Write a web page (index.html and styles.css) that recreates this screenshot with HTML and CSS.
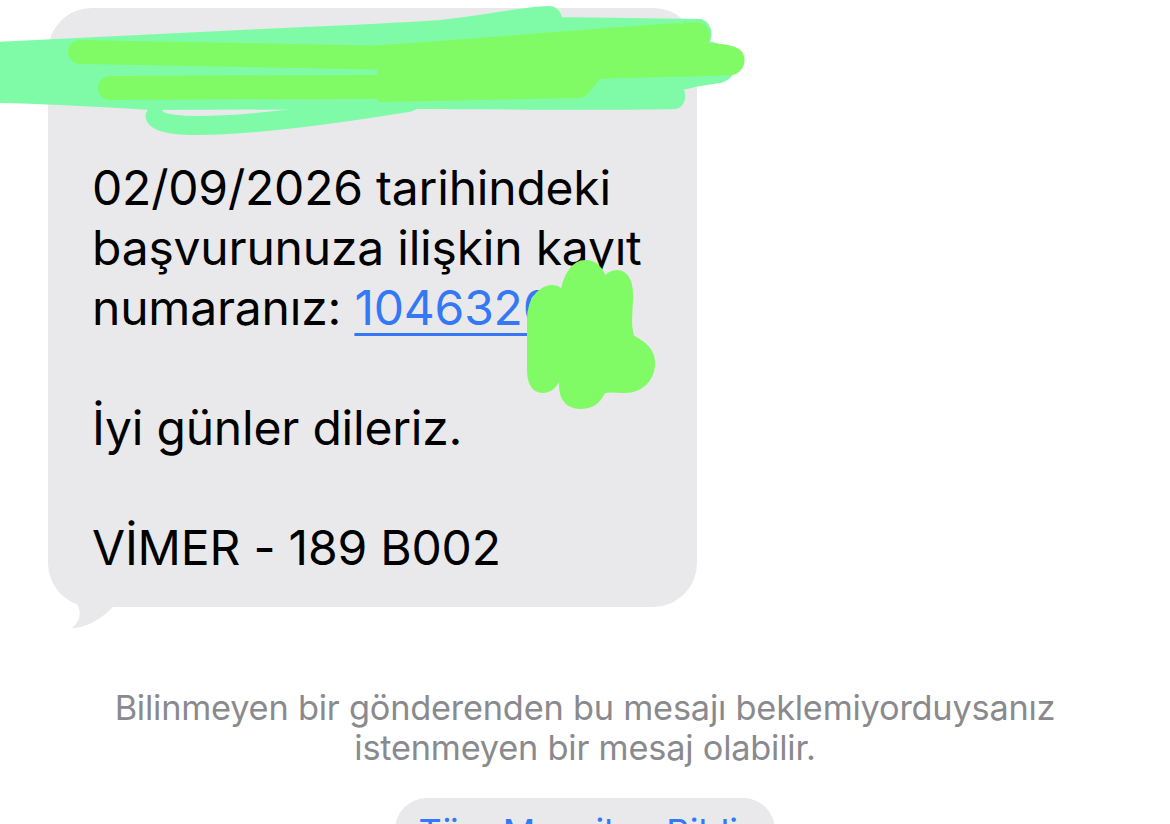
FILE: index.html
```html
<!DOCTYPE html>
<html lang="tr">
<head>
<meta charset="utf-8">
<title>Mesaj</title>
<link rel="stylesheet" href="styles.css">
</head>
<body>
<main class="thread">
  <div class="bubble-row">
    <div class="bubble">
      <svg class="tail" width="90" height="100" viewBox="0 0 90 100">
        <path d="M0 0 L0 23 C2 48 14 61 29 67 C34 75 32 85 24 91 C38 91 52 83 65 70 L90 70 L90 0 Z" fill="#e9e9eb"/>
      </svg>
      <p class="msg">02/09/2026 tarihindeki başvurunuza ilişkin kayıt numaranız: <span class="link">1046320</span></p>
      <p class="msg">İyi günler dileriz.</p>
      <p class="msg">VİMER - 189 B002</p>
    </div>
  </div>
  <p class="notice">Bilinmeyen bir gönderenden bu mesajı beklemiyorduysanız<br>istenmeyen bir mesaj olabilir.</p>
  <div class="actions">
    <button class="report">Tüm Mesajları Bildir</button>
  </div>
</main>
<svg class="scribble" width="1170" height="420" viewBox="0 0 1170 420">
  <g fill="#7ffba8" stroke="#7ffba8" stroke-width="6" stroke-linejoin="round">
    <path d="M-5 45 C60 42 150 37 260 32 C330 29 380 27 440 23 C490 18 520 10 548 9 C556 9 558 14 560 20 C620 21 670 21 700 22 C710 24 711 40 704 43 C718 46 730 50 732 60 C734 72 728 78 720 80 C705 82 690 84 680 88 C684 96 682 104 676 106 C600 108 480 106 430 106 C300 106 200 106 150 107 C100 104 50 101 -5 100 L-5 84 C10 82 20 81 27 80 C15 78 5 78 -5 78 Z"/>
  </g>
  <g fill="none" stroke-linecap="round" stroke-linejoin="round">
    <path d="M155 116 C158 132 250 128 410 102" stroke="#7ffba8" stroke-width="19"/>
    <path d="M80 52 C230 55 320 57 400 58" stroke="#80fb66" stroke-width="24"/>
    <path d="M110 88 C300 88 450 88 575 86" stroke="#80fb66" stroke-width="24"/>
  </g>
  <g fill="#80fb66" stroke="#80fb66" stroke-width="6" stroke-linejoin="round">
    <path d="M380 48 C480 42 600 30 698 25 C708 26 710 42 702 46 C715 46 735 47 740 54 C744 62 740 70 732 72 C700 74 640 74 600 76 C592 80 590 92 580 95 C500 97 430 98 380 99 Z"/>
    <path d="M530 320 C530 295 545 288 552 288 C558 288 562 292 563 296 C565 275 575 263 585 263 C595 263 602 270 604 282 C607 276 612 273 617 273 C626 273 631 283 630 300 C629 318 628 330 632 338 C645 345 653 352 652 365 C651 380 640 390 625 390 C615 390 605 388 602 392 C598 402 590 406 580 406 C568 406 562 398 562 385 C562 376 561 370 560 368 C558 382 552 390 543 390 C533 390 530 380 530 370 Z"/>
  </g>
</svg>
</body>
</html>
```

FILE: styles.css
```css
html, body {
  margin: 0;
  padding: 0;
  background: #ffffff;
  overflow: hidden;
  height: 824px;
}
body {
  position: relative;
  font-family: "Inter", "Roboto", "Liberation Sans", sans-serif;
}
.thread {
  display: flex;
  flex-direction: column;
  padding-top: 8px;
}
.bubble-row {
  display: flex;
  padding-left: 48px;
}
.bubble {
  position: relative;
  width: 649px;
  box-sizing: border-box;
  background: #e9e9eb;
  border-radius: 44px;
  padding: 150px 20px 29px 44px;
}
.msg {
  position: relative;
  z-index: 1;
  margin: 0 0 60px 0;
  font-size: 48px;
  line-height: 60px;
  color: #000;
  letter-spacing: -0.2px;
}
.msg:last-of-type {
  margin-bottom: 0;
}
.link {
  color: #3478f6;
  text-decoration: underline;
  text-decoration-thickness: 3px;
  text-underline-offset: 8px;
}
.tail {
  position: absolute;
  z-index: 0;
  left: 0;
  bottom: -30px;
}
.notice {
  margin: 81px 0 0 0;
  text-align: center;
  font-size: 34.3px;
  line-height: 40px;
  color: #8a8a8e;
  letter-spacing: -0.2px;
}
.actions {
  display: flex;
  justify-content: center;
  margin-top: 30px;
}
.report {
  width: 380px;
  height: 64px;
  border: none;
  border-radius: 32px;
  background: #e9e9eb;
  color: #3478f6;
  font-family: inherit;
  font-size: 36px;
  padding: 12px 0 0 0;
  display: flex;
  justify-content: center;
  align-items: flex-start;
}
.scribble {
  position: absolute;
  z-index: 2;
  left: 0;
  top: 0;
  pointer-events: none;
}
```
